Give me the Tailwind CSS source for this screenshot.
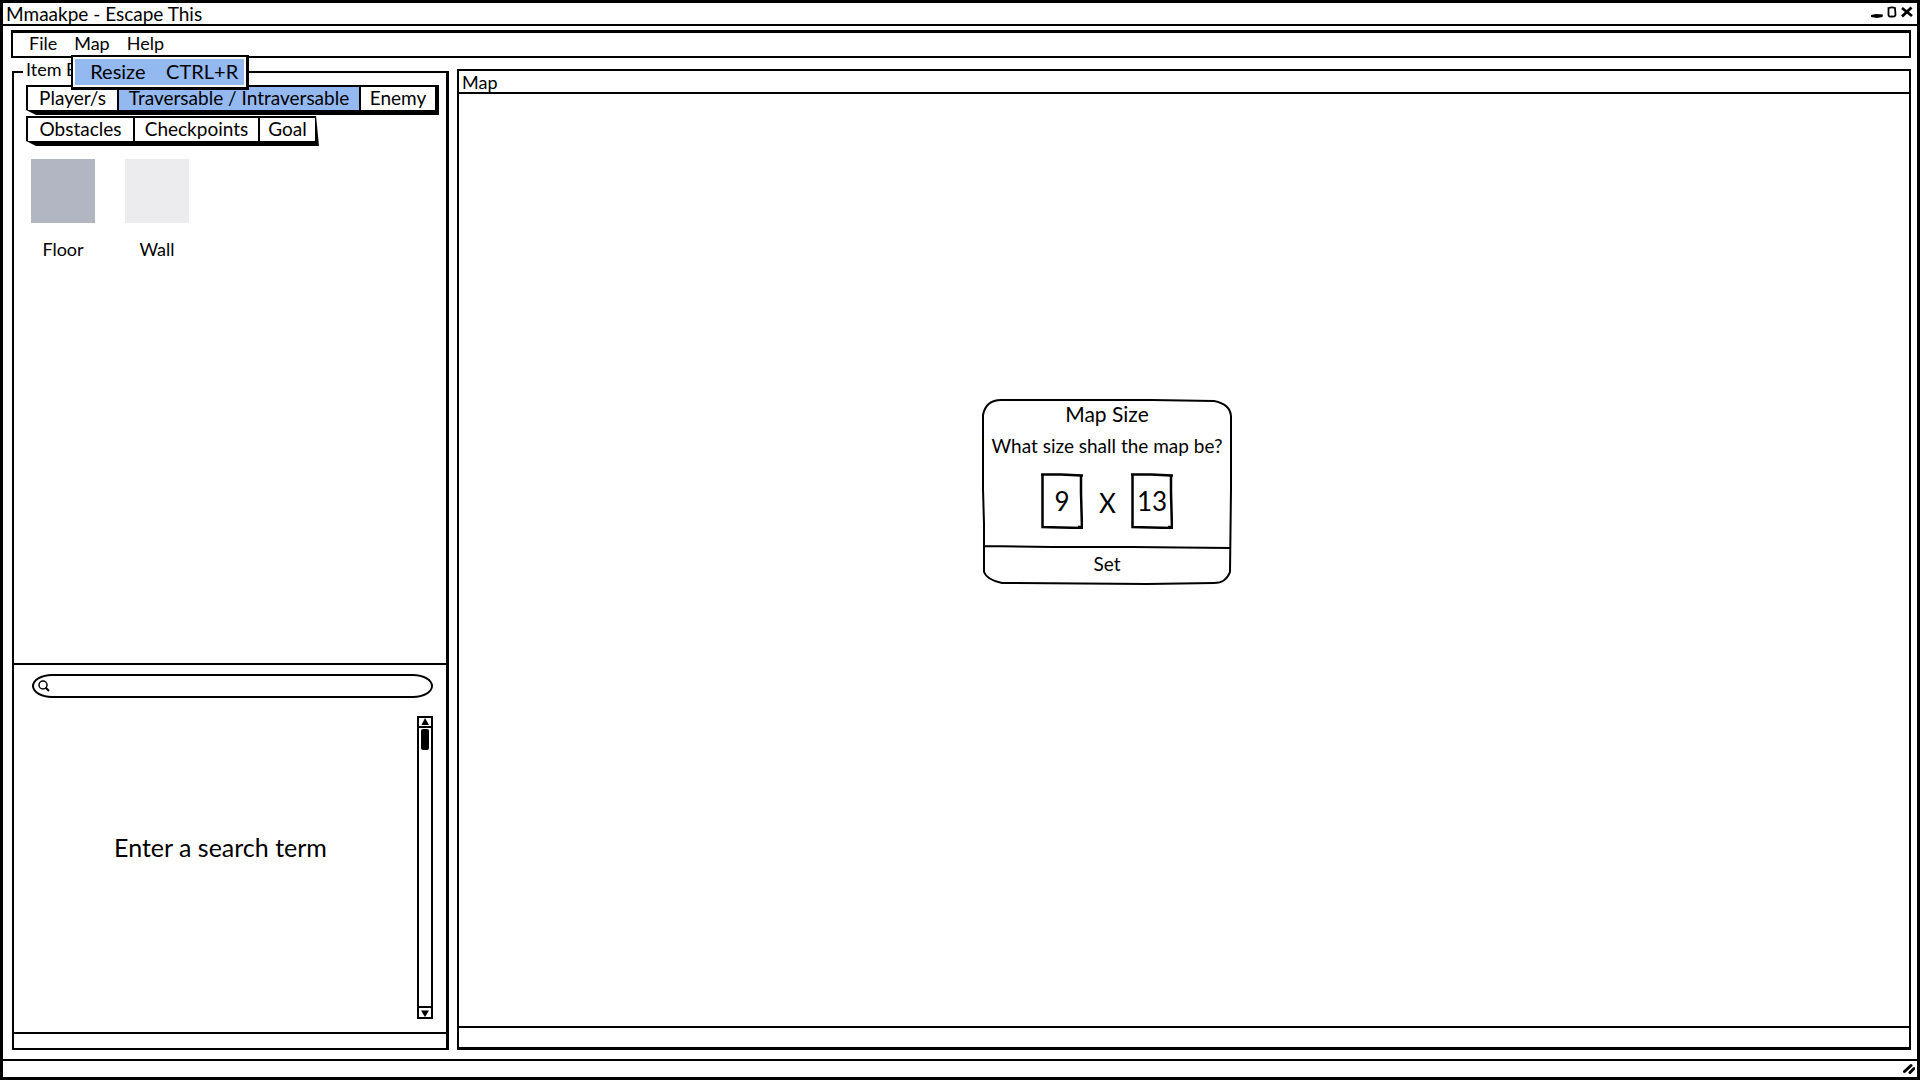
<!DOCTYPE html>
<html lang="en">
<head>
<meta charset="utf-8">
<title>Mmaakpe - Escape This</title>
<script src="https://cdn.jsdelivr.net/npm/@tailwindcss/browser@4"></script>
</head>
<body class="bg-white font-['Lato','Open_Sans',sans-serif] text-[18px] leading-5 text-black">
<div class="flex min-h-screen flex-col border-[3px] border-black">
  <header class="flex h-[23px] items-center justify-between border-b-2 border-black pr-1 pl-[3px]">
    <h1 class="text-[19px]">Mmaakpe - Escape This</h1>
    <div class="flex items-center gap-[3px] pb-1">
      <button aria-label="Minimize"><svg class="h-3 w-3" viewBox="0 0 12 12"><path d="M0 9L5 8L12 8.500L11.500 11L6 12L0 11z"/></svg></button>
      <button aria-label="Maximize"><svg class="h-3 w-3" viewBox="0 0 12 12" fill="none" stroke="#000" stroke-width="1.800"><path d="M2.500 2Q6 .8 9 2L9.500 9Q9 11 6 10.500 2.500 11 2.500 9z"/></svg></button>
      <button aria-label="Close"><svg class="h-3 w-3" viewBox="0 0 12 12" stroke="#000" stroke-width="2.800"><path d="M1 2L11 10M10.500 1.500L1 10.500"/></svg></button>
    </div>
  </header>

  <nav class="mt-1 mr-1.5 ml-2 flex h-[28px] items-center gap-[17px] border-2 border-t-[3px] border-black pb-[3px] pl-4">
    <button>File</button>
    <div class="relative">
      <button>Map</button>
      <div class="absolute top-[22px] -left-[3px] z-10 w-[178px] border-2 border-r-[3px] border-b-[3px] border-black bg-white p-0.5">
        <button class="flex h-[26px] w-full items-center justify-between bg-[#94b9f1] pr-1.5 pb-0.5 pl-[15px] text-[20px]"><span>Resize</span><span>CTRL+R</span></button>
      </div>
    </div>
    <button>Help</button>
  </nav>

  <main class="flex flex-1 gap-2 pr-1.5 pl-[9px] pb-[9px]">
    <fieldset class="mt-px flex w-[437px] shrink-0 flex-col border-2 border-r-[3px] border-black">
      <legend class="ml-[9px] px-[3px] pb-1.5">Item B</legend>
      <section class="flex-1">
        <div class="flex flex-col items-start gap-px pl-3 text-[19px]">
          <div class="flex h-[30px] border-2 border-r-4 border-b-[5px] border-black [clip-path:polygon(0_0,100%_0,100%_100%,10px_100%,0_25px)]">
            <button class="w-[91px] border-r-2 border-black pb-0.5">Player/s</button>
            <button class="w-[242px] border-r-2 border-black bg-[#94b9f1] pb-0.5">Traversable / Intraversable</button>
            <button class="w-[74px] pb-0.5">Enemy</button>
          </div>
          <div class="flex h-[30px] border-2 border-r-4 border-b-[5px] border-black [clip-path:polygon(0_0,99%_0,100%_100%,10px_100%,0_25px)]">
            <button class="w-[107px] border-r-2 border-black pb-0.5">Obstacles</button>
            <button class="w-[125px] border-r-2 border-black pb-0.5">Checkpoints</button>
            <button class="w-[55px] pb-0.5">Goal</button>
          </div>
        </div>
        <div class="mt-[13px] flex gap-[30px] pl-[17px] text-center">
          <figure class="w-16"><div class="h-16 bg-[#b2b6c2]"></div><figcaption class="mt-4">Floor</figcaption></figure>
          <figure class="w-16"><div class="h-16 bg-[#ecebed]"></div><figcaption class="mt-4">Wall</figcaption></figure>
        </div>
      </section>
      <section class="flex h-[369px] flex-col border-t-2 border-black pt-[9px] pr-[13px] pl-[18px]">
        <label class="flex h-6 shrink-0 items-center rounded-[20px/12px] border-2 border-black pl-1">
          <svg class="h-3 w-3" viewBox="0 0 12 12" fill="none" stroke="#000" stroke-width="1.500"><circle cx="5" cy="5" r="4"/><path d="M7.500 7.500L11 11" stroke-width="2"/></svg>
          <input type="search" aria-label="Search" class="h-5 min-w-0 flex-1 bg-transparent px-2 outline-none">
        </label>
        <div class="flex flex-1 pt-[18px] pb-[13px]">
          <p class="flex flex-1 items-center justify-center pr-2 pb-[42px] text-[25px] leading-6">Enter a search term</p>
          <div class="flex w-4 flex-col border-2 border-black">
            <button aria-label="Scroll up" class="flex h-[10px] items-center justify-center border-b-2 border-black"><svg class="h-2 w-2" viewBox="0 0 8 8"><path d="M4 0L8 7H.5z"/></svg></button>
            <div class="flex flex-1 justify-center pt-px"><div class="h-[21px] w-2 rounded-[2px] bg-black"></div></div>
            <button aria-label="Scroll down" class="flex h-[11px] items-center justify-center border-t-2 border-black"><svg class="h-2 w-2" viewBox="0 0 8 8"><path d="M0 1.500H8L4 8z"/></svg></button>
          </div>
        </div>
      </section>
      <div class="h-4 border-t-2 border-black"></div>
    </fieldset>

    <section class="mt-[11px] flex flex-1 flex-col border-2 border-b-[3px] border-black">
      <h2 class="h-[23px] border-b-2 border-black pt-px pl-[3px]">Map</h2>
      <div class="flex flex-1 items-center justify-center pr-[154px]">
        <form class="relative mb-[137px] flex h-[186px] w-[250px] flex-col items-center">
          <svg class="absolute inset-0 h-full w-full" viewBox="0 0 250 186" preserveAspectRatio="none" fill="none" stroke="#000" stroke-width="2"><path d="M1 16Q4 1 19 1L105 1 170 1 232 2Q248 5 249 17V90L248 173Q244 184 232 184L165 185 20 184Q5 181 2 173V125L1 90zM2 147L70 148H150L248 149"/></svg>
          <h3 class="relative mt-[5px] text-[21px]">Map Size</h3>
          <p class="relative mt-3 text-[19px]">What size shall the map be?</p>
          <div class="relative mt-[17px] flex h-14 items-center gap-4 text-[26px]">
            <span class="relative flex h-14 w-[42px]"><svg class="absolute inset-0 h-full w-full" viewBox="0 0 42 56" fill="none" stroke="#000" stroke-width="2.500"><path d="M1.500 1.500L20 1.500 40 2.500V20L41 55 20 54.500 1.500 54V28zM0 1.500H4M38 2.500H42M37 54H42"/></svg><input aria-label="Map width" value="9" class="relative w-full text-center outline-none"></span>
            <span class="w-4 pt-1 text-center">X</span>
            <span class="relative flex h-14 w-[42px]"><svg class="absolute inset-0 h-full w-full" viewBox="0 0 42 56" fill="none" stroke="#000" stroke-width="2.500"><path d="M1.500 1.500L20 1.500 40 2.500V20L41 55 20 54.500 1.500 54V28zM0 1.500H4M38 2.500H42M37 54H42"/></svg><input aria-label="Map height" value="13" class="relative w-full text-center outline-none"></span>
          </div>
          <button class="relative mt-[19px] h-8 w-full text-[19px]">Set</button>
        </form>
      </div>
      <div class="h-[21px] border-t-2 border-black"></div>
    </section>
  </main>

  <footer class="flex h-[18px] items-center justify-end border-t-2 border-black pr-0.5">
    <svg class="h-3 w-3" viewBox="0 0 12 12" stroke="#000" stroke-width="3" stroke-linecap="round"><path d="M1.500 8.500L8 2.500M7 9.500L11 5.500"/></svg>
  </footer>
</div>
</body>
</html>
